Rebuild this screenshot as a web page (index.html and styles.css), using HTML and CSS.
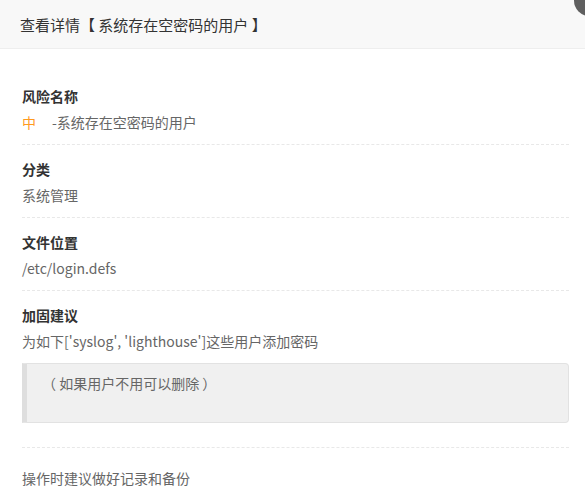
FILE: index.html
```html
<!DOCTYPE html>
<html lang="zh-CN">
<head>
    <meta charset="UTF-8">
    <title>查看详情</title>
    <link rel="stylesheet" href="styles.css">
</head>
<body>
    <div class="layer">
        <div class="layer-title">查看详情【 系统存在空密码的用户 】</div>
        <span class="layer-close"></span>

        <div class="layer-content">
            <div class="detail-item">
                <div class="detail-label">风险名称</div>
                <div class="detail-value"><span class="level-mid">中</span>-系统存在空密码的用户</div>
            </div>
            <div class="detail-item">
                <div class="detail-label">分类</div>
                <div class="detail-value">系统管理</div>
            </div>
            <div class="detail-item">
                <div class="detail-label">文件位置</div>
                <div class="detail-value">/etc/login.defs</div>
            </div>
            <div class="detail-item">
                <div class="detail-label">加固建议</div>
                <div class="detail-value">为如下['syslog', 'lighthouse']这些用户添加密码</div>
                <blockquote class="quote">（ 如果用户不用可以删除 ）</blockquote>
            </div>
            <div class="detail-tip">操作时建议做好记录和备份</div>
        </div>
    </div>
</body>
</html>
```

FILE: styles.css
```css
body {
    margin: 0;
    background-color: #fff;
    font-family: "Noto Sans CJK SC", "Liberation Sans", sans-serif;
    color: #666;
    overflow: hidden;
}
.layer {
    position: relative;
}
.layer-title {
    height: 48px;
    line-height: 50px;
    padding: 0 20px;
    font-size: 15px;
    color: #333;
    background-color: #f8f8f8;
    border-bottom: 1px solid #eee;
}
.layer-close {
    position: absolute;
    left: 574px;
    top: -15px;
    width: 31px;
    height: 31px;
    border-radius: 50%;
    background-color: #5f5f5f;
}
.layer-content {
    padding: 23px 16px 0 22px;
}
.detail-item {
    padding: 11px 0 9px;
    border-bottom: 1px dashed #e8e8e8;
}
.detail-label {
    font-size: 14px;
    font-weight: bold;
    line-height: 26px;
    color: #333;
}
.detail-value {
    font-size: 14px;
    line-height: 26px;
}
.level-mid {
    color: #ff9a1e;
    margin-right: 16px;
}
.quote {
    margin: 9px 0 15px;
    height: 50px;
    padding: 7px 15px 1px;
    font-size: 14px;
    line-height: 24px;
    background-color: #f0f0f0;
    border: 1px solid #e2e2e2;
    border-left: 5px solid #dedede;
    border-radius: 0 4px 4px 0;
}
.detail-tip {
    padding-top: 17px;
    font-size: 14px;
    line-height: 26px;
}
```
